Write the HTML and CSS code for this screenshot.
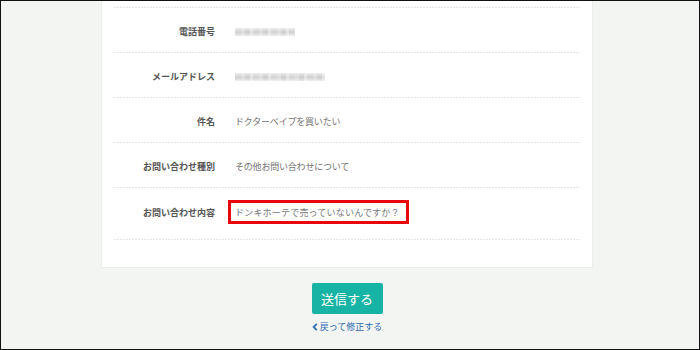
FILE: index.html
```html
<!DOCTYPE html>
<html lang="ja">
<head>
<meta charset="utf-8">
<link rel="stylesheet" href="styles.css">
</head>
<body>
<div class="frame">
  <div class="wrap">
    <div class="card">
      <div class="list">
        <div class="row">
          <div class="label">電話番号</div>
          <div class="value"><span class="blur blur-phone"></span></div>
        </div>
        <div class="row">
          <div class="label">メールアドレス</div>
          <div class="value"><span class="blur blur-mail"></span></div>
        </div>
        <div class="row">
          <div class="label">件名</div>
          <div class="value">ドクターベイプを買いたい</div>
        </div>
        <div class="row">
          <div class="label">お問い合わせ種別</div>
          <div class="value">その他お問い合わせについて</div>
        </div>
        <div class="row row-last">
          <div class="label">お問い合わせ内容</div>
          <div class="value"><span class="highlight">ドンキホーテで売っていないんですか？</span></div>
        </div>
      </div>
    </div>
    <div class="actions">
      <button class="submit">送信する</button>
      <a class="back" href="#"><svg class="chev" viewBox="0 0 6 8" width="6" height="8"><path d="M4.8 0.8 L1.6 4 L4.8 7.2" fill="none" stroke="#2e6db4" stroke-width="1.8"/></svg>戻って修正する</a>
    </div>
  </div>
</div>
</body>
</html>
```

FILE: styles.css
```css
html, body {
  margin: 0;
  padding: 0;
}
body {
  font-family: "Noto Sans CJK JP", "Noto Sans", sans-serif;
}
.frame {
  width: 700px;
  height: 350px;
  box-sizing: border-box;
  border: 1px solid #111;
  background: #f3f5f2;
  overflow: hidden;
}
.wrap {
  width: 492px;
  margin-left: 100px;
}
.card {
  background: #fff;
  border: 1px solid #eceeeb;
  border-top: none;
  padding: 6px 12px 27px;
}
.list {
  background-image: linear-gradient(to right, #e4e4e4 2px, transparent 2px);
  background-size: 3px 1px;
  background-repeat: repeat-x;
  background-position: 0 0;
  padding-top: 1px;
}
.row {
  display: flex;
  align-items: center;
  padding: 17px 0 15px;
  background-image: linear-gradient(to right, #e4e4e4 2px, transparent 2px);
  background-size: 3px 1px;
  background-repeat: repeat-x;
  background-position: 0 100%;
}
.row-last {
  padding: 12px 0 16px;
}
.label {
  width: 101px;
  flex: none;
  text-align: right;
  font-size: 9px;
  font-weight: bold;
  color: #555;
  line-height: 13px;
}
.value {
  margin-left: 20px;
  font-size: 9px;
  color: #737373;
  line-height: 13px;
  letter-spacing: -0.2px;
}
.blur {
  display: block;
  height: 8px;
  background:
    linear-gradient(to bottom, rgba(255,255,255,0.6), rgba(255,255,255,0) 45%, rgba(255,255,255,0) 60%, rgba(255,255,255,0.6)),
    repeating-linear-gradient(to right, #d4d4d4 0 6px, #dcdcdc 6px 10px, #cfcfcf 10px 15px, #e2e2e2 15px 18px);
}
.blur-phone {
  width: 60px;
}
.blur-mail {
  width: 90px;
}
.highlight {
  display: block;
  margin-left: -7px;
  border: 3px solid #e8070c;
  padding: 3px 6px 2px 4px;
  line-height: 13px;
  letter-spacing: 0.2px;
  color: #777;
}
.actions {
  display: flex;
  flex-direction: column;
  align-items: center;
  padding-top: 15px;
}
.submit {
  width: 71px;
  height: 31px;
  border: none;
  border-radius: 2px;
  background: #17b3a4;
  color: #fff;
  font-family: "Noto Sans CJK JP", sans-serif;
  font-size: 13px;
  padding: 0;
  line-height: 31px;
}
.back {
  margin-top: 7px;
  font-size: 9px;
  line-height: 12px;
  color: #2e6db4;
  text-decoration: none;
  display: flex;
  align-items: center;
  gap: 2px;
}
.chev {
  display: block;
}
```
